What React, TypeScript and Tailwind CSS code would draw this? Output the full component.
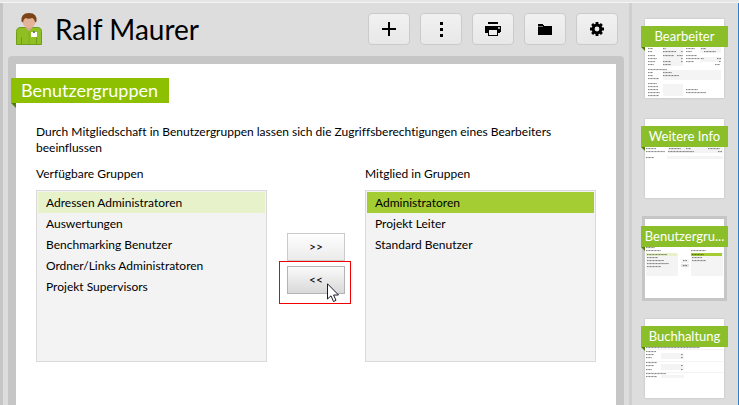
import type { ReactNode } from 'react'

const availableGroups = [
  'Adressen Administratoren',
  'Auswertungen',
  'Benchmarking Benutzer',
  'Ordner/Links Administratoren',
  'Projekt Supervisors',
]

const memberGroups = ['Administratoren', 'Projekt Leiter', 'Standard Benutzer']

const Avatar = () => (
  <svg width="27" height="33" viewBox="0 0 27 33" aria-hidden="true">
    <path d="M0.5 31.5V18.5Q0.5 14.500 5 14.500H21Q25.500 14.500 25.500 18.5V31.5Z" fill="#8fbf22" stroke="#6f9e1a" />
    <path d="M5.5 24V31M20.5 24V31" stroke="#6f9e1a" />
    <path d="M13 17V31" stroke="#7fae1c" />
    <path d="M9.5 11H16.5V14.500L13 18.500L9.5 14.500Z" fill="#d9a88c" />
    <ellipse cx="13" cy="8.500" rx="6.500" ry="6.500" fill="#e3b399" />
    <path d="M5.5 8.5Q4.500 0 13 0T20.500 8.500L19 9.500Q19 6.500 16.500 5Q12 6.500 9.500 5Q7 6.500 7 9.500Z" fill="#7c4318" />
    <rect x="15" y="19" width="6" height="5" fill="#fff" />
    <rect x="17" y="18" width="2" height="2" fill="#777" />
  </svg>
)

const PlusIcon = () => (
  <svg width="14" height="14" viewBox="0 0 14 14" shapeRendering="crispEdges" aria-hidden="true">
    <path d="M0 6H14V8H0ZM6 0H8V14H6Z" />
  </svg>
)

const DotsIcon = () => (
  <svg width="3" height="15" viewBox="0 0 3 15" shapeRendering="crispEdges" aria-hidden="true">
    <path d="M0 0H3V3H0ZM0 6H3V9H0ZM0 12H3V15H0Z" />
  </svg>
)

const PrintIcon = () => (
  <svg width="16" height="14" viewBox="0 0 16 14" shapeRendering="crispEdges" aria-hidden="true">
    <path d="M3 0H13V2H3ZM0 4H16V10H15V11H13V14H3V11H0Z" />
    <path d="M4 8H12V13H4Z" fill="#f0f0f0" />
    <path d="M13 5H15V7H13Z" fill="#aaa" />
  </svg>
)

const FolderIcon = () => (
  <svg width="14" height="11" viewBox="0 0 14 11" shapeRendering="crispEdges" aria-hidden="true">
    <path d="M0 0H5V1H6V2H14V11H0Z" />
    <path d="M0 2H5V3H0Z" fill="#777" />
  </svg>
)

const GearIcon = () => (
  <svg width="14" height="14" viewBox="-7 -7 14 14" aria-hidden="true">
    <circle r="3.900" fill="none" stroke="#000" strokeWidth="3" />
    <path
      d="M0 -7V-4M0 7V4M-7 0H-4M7 0H4M-4.900 -4.900L-3 -3M4.900 -4.900L3 -3M-4.900 4.900L-3 3M4.900 4.900L3 3"
      stroke="#000"
      strokeWidth="2.800"
    />
  </svg>
)

const ToolButton = ({ label, children }: { label: string; children: ReactNode }) => (
  <button
    type="button"
    aria-label={label}
    className="flex h-8 w-[42px] items-center justify-center rounded-sm border border-[#cbcbcb] bg-linear-to-b from-[#f1f1f1] to-[#e8e8e8]"
  >
    {children}
  </button>
)

const MoveButton = ({ label, active, children }: { label: string; active?: boolean; children: ReactNode }) => (
  <button
    type="button"
    aria-label={label}
    className={
      active
        ? 'h-7 w-full border border-[#b4b4b4] bg-linear-to-b from-[#fafafa] to-[#d9d9d9]'
        : 'h-7 w-full border border-[#cbcbcb] bg-linear-to-b from-[#fefefe] to-[#ebebeb]'
    }
  >
    {children}
  </button>
)

type GroupListProps = { id: string; label: string; groups: string[]; tone: string }

const GroupList = ({ id, label, groups, tone }: GroupListProps) => (
  <div className="flex min-w-0 flex-1 flex-col">
    <label htmlFor={id} className="mb-2 leading-4">
      {label}
    </label>
    <select
      id={id}
      size={8}
      defaultValue={groups[0]}
      className="h-[172px] w-full appearance-none overflow-hidden border border-[#d9d9d9] bg-[#f3f3f3] p-px outline-none"
    >
      {groups.map((group) => (
        <option
          key={group}
          className={`h-[21px] px-2 pt-[3px] pb-0 text-black [font-variant-ligatures:none] checked:bg-linear-to-r ${tone}`}
        >
          {group}
        </option>
      ))}
    </select>
  </div>
)

const Cursor = () => (
  <svg className="absolute top-[21px] left-[47px]" width="12" height="20" viewBox="0 0 12 20" aria-hidden="true">
    <path d="M0.500 0.800V16L4 12.800L6.500 18.500L9 17.400L6.600 12H11.500Z" fill="#fff" stroke="#1a1a2a" />
  </svg>
)

type Mark = [x: number, y: number, width: number]
type Box = [x: number, y: number, width: number, height: number, fill?: string]

// Miniature form: grey fields with dashes standing in for the labels
const Preview = ({ boxes, marks }: { boxes: Box[]; marks: Mark[] }) => (
  <svg className="block" width="79" height="79" viewBox="0 0 79 79" aria-hidden="true">
    {boxes.map(([x, y, width, height, fill = '#f4f4f4'], index) => (
      <rect key={index} x={x} y={y} width={width} height={height} fill={fill} />
    ))}
    {marks.map(([x, y, width]) => (
      <path
        key={`${x}-${y}`}
        d={`M${x} ${y + 0.6}h${width}`}
        stroke="#000"
        strokeOpacity="0.500"
        strokeDasharray="1.400 0.400 0.800 0.300"
      />
    ))}
  </svg>
)

type Tab = { title: string; current?: boolean; boxes: Box[]; marks: Mark[] }

const tabs: Tab[] = [
  {
    title: 'Bearbeiter',
    boxes: [
      [18, 28, 20, 19], [55, 28, 21, 6], [55, 38, 21, 5], [18, 51, 58, 10], [18, 65, 20, 12],
    ],
    marks: [
      [3, 29, 5], [18, 29, 3], [41, 29, 9], [56, 29, 5],
      [3, 32, 4], [18, 32, 13], [36, 32, 2], [41, 32, 6], [59, 32, 12],
      [3, 36, 7], [18, 36, 11], [32, 36, 6], [41, 36, 11],
      [3, 39, 9], [36, 39, 2], [41, 39, 14], [56, 39, 3], [72, 39, 4],
      [3, 42, 7], [18, 42, 8], [36, 42, 2], [41, 42, 8], [74, 42, 2],
      [3, 45, 6], [18, 45, 8], [70, 45, 5],
      [3, 50, 19], [3, 53, 5], [18, 53, 9], [3, 56, 5], [18, 56, 16], [3, 59, 11],
      [3, 64, 9], [3, 67, 10], [3, 70, 10], [41, 70, 12], [3, 73, 12], [41, 73, 20], [3, 76, 11],
    ],
  },
  {
    title: 'Weitere Info',
    boxes: [[23, 28, 55, 6], [22, 37, 56, 3]],
    marks: [
      [1, 29, 10], [24, 29, 12], [41, 29, 5], [63, 29, 12],
      [1, 32, 19], [23, 32, 26], [73, 32, 4], [1, 38, 8],
    ],
  },
  {
    title: 'Benutzergru...',
    current: true,
    boxes: [
      [1, 34, 32, 23], [46, 34, 32, 23], [1, 34, 31, 3, '#e7f2cb'], [46, 34, 31, 3, '#a4cc33'],
      [36, 40, 8, 4], [36, 45, 8, 3, '#e2e2e2'],
    ],
    marks: [
      [1, 28, 9], [1, 31, 15], [46, 31, 15], [2, 35, 20], [47, 35, 12],
      [2, 38, 11], [47, 38, 10], [2, 41, 17], [47, 41, 14], [2, 44, 22], [2, 47, 14],
      [38, 41, 4], [38, 46, 4],
    ],
  },
  {
    title: 'Buchhaltung',
    boxes: [
      [1, 30, 77, 1], [16, 34, 23, 6], [1, 42, 77, 1], [16, 45, 23, 6], [1, 53, 77, 1], [16, 56, 23, 3],
    ],
    marks: [
      [1, 28, 54], [1, 32, 10], [1, 35, 8], [36, 35, 2], [1, 38, 6], [36, 38, 2],
      [1, 43, 11], [1, 46, 8], [36, 46, 2], [1, 50, 6], [36, 50, 2], [1, 54, 20], [1, 57, 11],
    ],
  },
]

const PreviewTab = ({ title, current, boxes, marks }: Tab) => (
  <a
    href="#"
    aria-current={current ? 'page' : undefined}
    className={
      current
        ? 'relative block size-[79px] bg-white ring-3 ring-[#c6c6c6]'
        : 'relative block size-[79px] bg-white shadow-[0_0_2px_#bbb]'
    }
  >
    <Preview boxes={boxes} marks={marks} />
    <span className="absolute top-[7px] -right-1 -left-1 bg-[#8bbf29] text-center text-[13px] leading-[21px] whitespace-nowrap text-white">
      {title}
    </span>
    <span className="absolute top-7 -left-1 size-1 bg-[#4f7d0c] [clip-path:polygon(0_0,100%_0,100%_100%)]" />
  </a>
)

export default function App() {
  return (
    <div className="flex min-h-screen flex-col bg-[#ddd] font-[Lato,'Noto_Sans',sans-serif] text-[12px] text-black [font-variant-ligatures:none]">
      <div className="h-[3px] border-b border-[#f4f4f4] bg-[#e6e6e6]" />

      <div className="flex flex-1 border-r border-[#2b82d0]">
        <div className="w-[3px] bg-[#c6c6c6]" />

        <main className="flex min-w-0 flex-1 flex-col px-[5px] pt-2.5">
          <header className="flex h-8 items-center pr-1.5 pl-2">
            <Avatar />
            <h1 className="ml-3 flex-1 text-[28px] leading-8">Ralf Maurer</h1>
            <div className="flex gap-2.5">
              <ToolButton label="Neu"><PlusIcon /></ToolButton>
              <ToolButton label="Mehr"><DotsIcon /></ToolButton>
              <ToolButton label="Drucken"><PrintIcon /></ToolButton>
              <ToolButton label="Ordner"><FolderIcon /></ToolButton>
              <ToolButton label="Einstellungen"><GearIcon /></ToolButton>
            </div>
          </header>

          <section className="mt-[11px] flex flex-1 rounded-t-sm bg-[#c6c6c6] px-2 pt-2">
            <div className="min-w-0 flex-1 bg-white pt-3.5">
              <div className="relative -ml-[5px] w-fit bg-[#8cc000]">
                <h2 className="pr-[11px] pl-2.5 text-[18px] leading-[25px] text-white">Benutzergruppen</h2>
                <span className="absolute top-full left-0 size-[5px] bg-[#4f7d0c] [clip-path:polygon(0_0,100%_0,100%_100%)]" />
              </div>

              <div className="px-5 pt-[21px]">
                <p className="leading-4">
                  Durch Mitgliedschaft in Benutzergruppen lassen sich die Zugriffsberechtigungen eines Bearbeiters
                  beeinflussen
                </p>

                <div className="mt-2.5 flex gap-5">
                  <GroupList
                    id="available"
                    label="Verfügbare Gruppen"
                    groups={availableGroups}
                    tone="checked:from-[#e7f2cb] checked:to-[#e7f2cb]"
                  />
                  <div className="flex w-[58px] flex-col gap-[5px] pt-[67px]">
                    <MoveButton label="Hinzufügen">&gt;&gt;</MoveButton>
                    <div className="relative">
                      <MoveButton label="Entfernen" active>&lt;&lt;</MoveButton>
                      <div className="pointer-events-none absolute -top-[5px] -right-1.5 -bottom-2.5 -left-2 border border-[#f00000]">
                        <Cursor />
                      </div>
                    </div>
                  </div>
                  <GroupList
                    id="member"
                    label="Mitglied in Gruppen"
                    groups={memberGroups}
                    tone="checked:from-[#a4cc33] checked:to-[#a4cc33]"
                  />
                </div>
              </div>
            </div>
          </section>
        </main>

        <aside className="w-[109px] border-l-3 border-[#cfcfcf] pt-4 pl-[13px]">
          <nav className="flex flex-col gap-[21px]">
            {tabs.map((tab) => (
              <PreviewTab key={tab.title} {...tab} />
            ))}
          </nav>
        </aside>
      </div>
    </div>
  )
}
